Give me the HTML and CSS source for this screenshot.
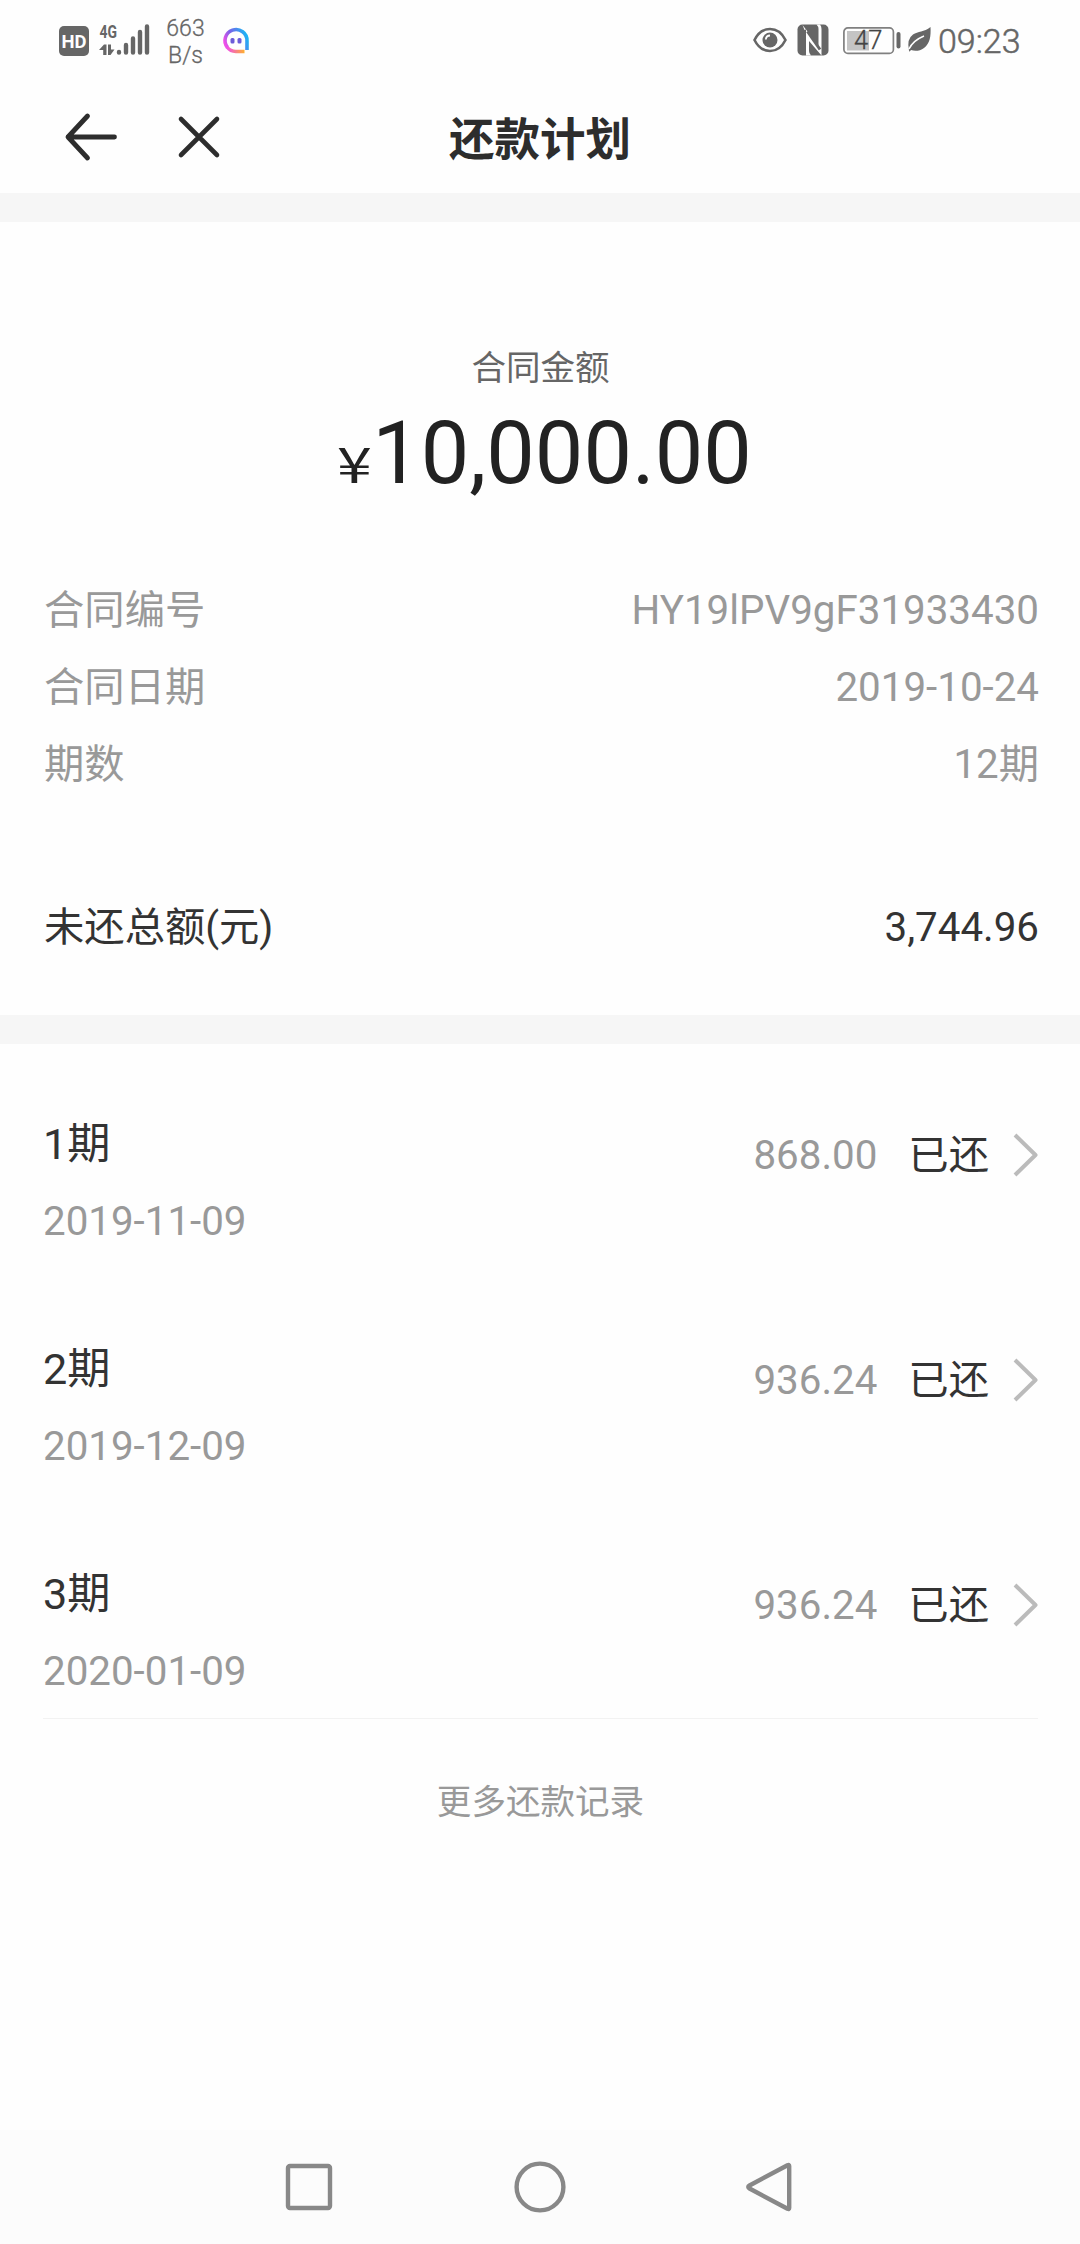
FILE: index.html
```html
<!DOCTYPE html>
<html lang="zh-CN">
<head>
<meta charset="utf-8">
<title>还款计划</title>
<link rel="stylesheet" href="styles.css">
</head>
<body>
<div class="status">
  <svg class="hd" width="30" height="30" viewBox="0 0 30 30"><rect width="30" height="30" rx="5" fill="#666"/><text x="2.500" y="21.800" textLength="25" lengthAdjust="spacingAndGlyphs" class="hd-text">HD</text></svg>
  <svg class="signal" width="51" height="32" viewBox="0 0 51 32">
    <text x=".5" y="14" textLength="17.500" lengthAdjust="spacingAndGlyphs" class="net-text">4G</text>
    <g stroke="#666" fill="none" stroke-width="4.400" stroke-linecap="round"><path d="M20 28v.5M27 21v7.500M34 14.500v14M41 8v20.500M48 2.500v26"/></g>
    <path d="M0 26 5 20.500H7.500V31H4.200v-5zM9 20.500h3v5h3.500L11.500 31H9z" fill="#666"/>
  </svg>
  <div class="speed"><span>663</span><span>B/s</span></div>
  <svg class="chat" width="26" height="26" viewBox="0 0 26 26">
    <defs><linearGradient id="ring" x1="0" y1="0.700" x2="1" y2="0.300"><stop offset="0" stop-color="#f04fe8"/><stop offset=".4" stop-color="#7a62e8"/><stop offset="1" stop-color="#1cb4f4"/></linearGradient>
    <linearGradient id="base" x1="0" y1="0" x2="1" y2="0"><stop offset="0" stop-color="#f04fe8"/><stop offset="1" stop-color="#ffb02e"/></linearGradient></defs>
    <path d="M4.500 19.500A11 11 0 1 1 24 13v9" fill="none" stroke="url(#ring)" stroke-width="3.600"/>
    <path d="M4 19q3.500 4.600 9 4.500h8.500" fill="none" stroke="url(#base)" stroke-width="3.400"/>
    <rect x="7.500" y="10" width="4" height="5.500" rx="1.500" fill="#6b5bd8"/><rect x="14.500" y="10" width="4" height="5.500" rx="1.500" fill="#6b5bd8"/>
  </svg>
  <svg class="eye" width="34" height="26" viewBox="0 0 34 26"><path d="M1.500 13C5 6 10.500 2 17 2s12 4 15.500 11C29 20 23.500 24 17 24S5 20 1.500 13z" fill="none" stroke="#666" stroke-width="2.600"/><circle cx="17" cy="13" r="7.500" fill="#666"/><path d="M12.800 12.500a4.400 4.400 0 0 1 4.200-4" fill="none" stroke="#fefefe" stroke-width="1.800"/></svg>
  <svg class="nfc" width="32" height="32" viewBox="0 0 32 32"><rect x=".5" y=".5" width="31" height="31" rx="5" fill="#666"/><path d="M9 31.500V5.500L21.500 22V5q0-2.500-2-4.500h3.500q1.500 1.500 1.500 4.500v26.500L12 17v10q0 2.500 2 4.500zM5.500 1 9 5.500 7.500 6z" fill="#fefefe"/><path d="M10.500 7.500 23 25.500" stroke="#666" stroke-width="3"/></svg>
  <svg class="battery" width="59" height="28" viewBox="0 0 59 28"><rect x=".9" y=".9" width="49.500" height="25.500" rx="4" fill="none" stroke="#808080" stroke-width="1.700"/><rect x="4" y="4" width="22" height="19.500" fill="#c4c4c4"/><path d="M55.500 7v12.500" stroke="#666" stroke-width="4" stroke-linecap="round"/><text x="11" y="22" class="charge">47</text></svg>
  <svg class="leaf" width="23" height="25" viewBox="0 0 23 25"><path d="M1 23.500Q-1.500 12 5 7.500C10 4 16 5.500 22.500 0c.5 9-.5 16.500-6.500 21-4 3-9 3.500-13 2l-1.500 1.800z" fill="#666"/><path d="M1 22Q5 13.500 16 9" fill="none" stroke="#fefefe" stroke-width="1.500"/></svg>
  <div class="clock">09:23</div>
</div>
<header class="header">
  <svg width="53" height="48" viewBox="0 0 53 48"><path d="M22.500 3 3 24l19.500 21M3 24h46.500" fill="none" stroke="#2d2d2d" stroke-width="4.800" stroke-linecap="round" stroke-linejoin="round"/></svg>
  <svg class="close" width="42" height="42" viewBox="0 0 42 42"><path d="M3 3l36 36M39 3 3 39" stroke="#2d2d2d" stroke-width="4.600" stroke-linecap="round"/></svg>
  <h1 class="title">还款计划</h1>
</header>
<main class="main">
  <section class="summary">
    <div class="label">合同金额</div>
    <div class="amount"><span class="yen">¥</span><span>10,000.00</span></div>
    <div class="details">
      <div class="row"><span>合同编号</span><span>HY19lPV9gF31933430</span></div>
      <div class="row"><span>合同日期</span><span>2019-10-24</span></div>
      <div class="row"><span>期数</span><span>12期</span></div>
      <div class="row total"><span>未还总额(元)</span><span>3,744.96</span></div>
    </div>
  </section>
  <section class="plan">
    <div class="item">
      <div><div class="term">1期</div><div class="date">2019-11-09</div></div>
      <div class="state"><span class="money">868.00</span><span>已还</span><svg width="25" height="44" viewBox="0 0 25 44"><path d="M2 2l20.500 20L2 42" fill="none" stroke="#bbb" stroke-width="4" stroke-linejoin="round"/></svg></div>
    </div>
    <div class="item">
      <div><div class="term">2期</div><div class="date">2019-12-09</div></div>
      <div class="state"><span class="money">936.24</span><span>已还</span><svg width="25" height="44" viewBox="0 0 25 44"><path d="M2 2l20.500 20L2 42" fill="none" stroke="#bbb" stroke-width="4" stroke-linejoin="round"/></svg></div>
    </div>
    <div class="item last">
      <div><div class="term">3期</div><div class="date">2020-01-09</div></div>
      <div class="state"><span class="money">936.24</span><span>已还</span><svg width="25" height="44" viewBox="0 0 25 44"><path d="M2 2l20.500 20L2 42" fill="none" stroke="#bbb" stroke-width="4" stroke-linejoin="round"/></svg></div>
    </div>
    <div class="more">更多还款记录</div>
  </section>
</main>
<nav class="nav">
  <svg width="52" height="52" viewBox="0 0 52 52"><rect x="5" y="5" width="42" height="42" rx="2" fill="none" stroke="#888" stroke-width="4.400"/></svg>
  <svg width="52" height="52" viewBox="0 0 52 52"><circle cx="26" cy="26" r="23.400" fill="none" stroke="#888" stroke-width="4.400"/></svg>
  <svg width="52" height="52" viewBox="0 0 52 52"><path d="M42.500 4.200Q44.200 3.500 44.200 5v42q0 1.500-1.700.8L4.500 27.500q-2.500-1.500 0-3z" fill="none" stroke="#888" stroke-width="4.400" stroke-linejoin="round"/></svg>
</nav>
</body>
</html>
```
FILE: styles.css
```css
* { box-sizing: border-box; }
body {
  margin: 0;
  width: 1080px;
  height: 2244px;
  display: flex;
  flex-direction: column;
  background: #fefefe;
  color: #333;
  font-family: Roboto, "Noto Sans CJK SC", sans-serif;
  font-size: 40.32px;
}
svg { display: block; flex: none; overflow: visible; }

.status {
  height: 80px;
  padding: 0 60px 0 59px;
  display: flex;
  align-items: flex-start;
  color: #666;
}
.hd { margin-top: 26px; }
.hd-text { font: 700 19px Roboto, sans-serif; fill: #fefefe; }
.signal { margin: 24px 0 0 10px; }
.net-text { font: 700 18px Roboto, sans-serif; fill: #666; }
.speed {
  width: 41px;
  margin: 15px 0 0 15px;
  display: flex;
  flex-direction: column;
  align-items: center;
  font-size: 23px;
  font-weight: 300;
  line-height: 27px;
  -webkit-text-stroke: 0.3px #666;
}
.chat { margin: 28px 0 0 17px; }
.eye { margin: 27px 0 0 auto; }
.nfc { margin: 24px 0 0 10px; }
.battery { margin: 27px 0 0 14px; }
.charge { font: 300 25.500px Roboto, sans-serif; fill: #444; stroke: #444; stroke-width: 0.3px; }
.leaf { margin: 27px 0 0 6px; }
.clock {
  width: 82px;
  margin: 21px 0 0 7px;
  font-size: 34px;
  font-weight: 300;
  line-height: 40px;
  -webkit-text-stroke: 0.5px #666;
}

.header {
  position: relative;
  height: 113px;
  padding-left: 65px;
  display: flex;
  align-items: center;
}
.close { margin-left: 60px; }
.title {
  position: absolute;
  inset: 8px 0 0;
  margin: 0;
  text-align: center;
  color: #2d2d2d;
  font-size: 45.500px;
  font-weight: 700;
  line-height: 106px;
}

.main { flex: 1; }
.summary {
  height: 851px;
  padding: 122px 41px 0 44px;
  border-top: 29px solid #f6f6f6;
  border-bottom: 29px solid #f6f6f6;
}
.label {
  margin-right: 2px;
  text-align: center;
  color: #666;
  font-size: 34.56px;
  line-height: 48px;
}
.amount {
  height: 100px;
  margin: 12px 2px 0 0;
  display: flex;
  justify-content: center;
  align-items: baseline;
  color: #222;
  font-size: 86.4px;
  line-height: 100px;
}
.yen {
  width: 43px;
  padding-left: 8px;
  font-family: "Noto Sans CJK SC", sans-serif;
  font-size: 48.96px;
  font-weight: 400;
  line-height: 1;
  transform: scaleX(1.28);
  transform-origin: 8px 0;
}
.details { margin-top: 68px; color: #999; }
.row {
  display: flex;
  justify-content: space-between;
  line-height: 77px;
}
.total { margin-top: 86px; color: #333; }

.plan { padding: 0 42px 0 43px; }
.item {
  height: 225px;
  padding-top: 62px;
  display: flex;
  justify-content: space-between;
}
.last { border-bottom: 1px solid #f2f2f2; }
.term { font-size: 43.2px; line-height: 77px; }
.date { color: #999; line-height: 77px; }
.state {
  height: 98px;
  display: flex;
  align-items: center;
  line-height: 98px;
}
.state span { padding-top: 1px; }
.money { margin-right: 31px; color: #999; }
.state svg { margin-left: 24px; }
.more {
  margin-top: 59px;
  text-align: center;
  color: #999;
  font-size: 34.56px;
  line-height: 48px;
}

.nav {
  height: 114px;
  display: flex;
  justify-content: center;
  align-items: center;
  gap: 179px;
  background: #fcfcfc;
}
```
